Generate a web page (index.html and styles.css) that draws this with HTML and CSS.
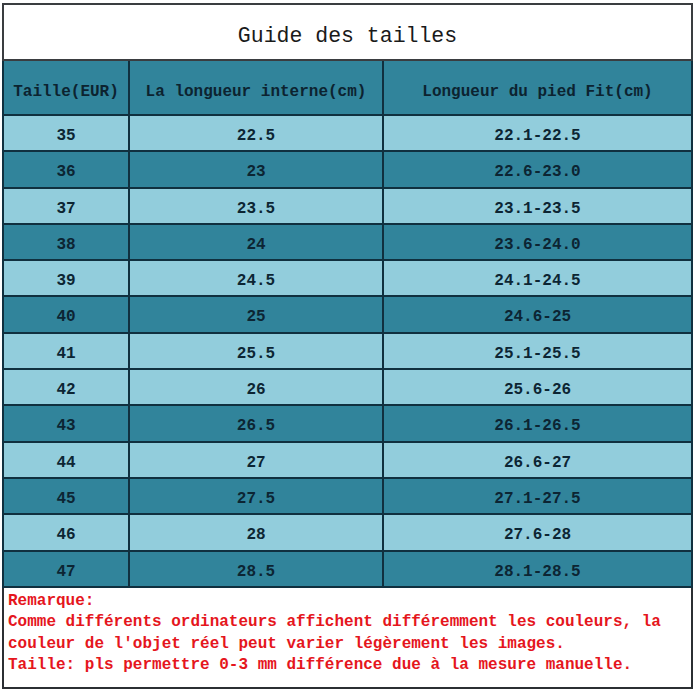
FILE: index.html
```html
<!DOCTYPE html>
<html lang="fr">
<head>
<meta charset="utf-8">
<title>Guide des tailles</title>
<link rel="stylesheet" href="styles.css">
</head>
<body>
<div class="sheet">
  <table class="sizes">
    <colgroup>
      <col class="c1"><col class="c2"><col class="c3">
    </colgroup>
    <thead>
      <tr class="title-row"><th colspan="3" class="title">Guide des tailles</th></tr>
      <tr class="head-row">
        <th>Taille(EUR)</th>
        <th>La longueur interne(cm)</th>
        <th>Longueur du pied Fit(cm)</th>
      </tr>
    </thead>
    <tbody>
      <tr class="light"><td>35</td><td>22.5</td><td>22.1-22.5</td></tr>
      <tr class="dark"><td>36</td><td>23</td><td>22.6-23.0</td></tr>
      <tr class="light"><td>37</td><td>23.5</td><td>23.1-23.5</td></tr>
      <tr class="dark"><td>38</td><td>24</td><td>23.6-24.0</td></tr>
      <tr class="light"><td>39</td><td>24.5</td><td>24.1-24.5</td></tr>
      <tr class="dark"><td>40</td><td>25</td><td>24.6-25</td></tr>
      <tr class="light"><td>41</td><td>25.5</td><td>25.1-25.5</td></tr>
      <tr class="light"><td>42</td><td>26</td><td>25.6-26</td></tr>
      <tr class="dark"><td>43</td><td>26.5</td><td>26.1-26.5</td></tr>
      <tr class="light"><td>44</td><td>27</td><td>26.6-27</td></tr>
      <tr class="dark"><td>45</td><td>27.5</td><td>27.1-27.5</td></tr>
      <tr class="light"><td>46</td><td>28</td><td>27.6-28</td></tr>
      <tr class="dark"><td>47</td><td>28.5</td><td>28.1-28.5</td></tr>
    </tbody>
    <tfoot>
      <tr class="note-row">
        <td colspan="3" class="note">
          <div>Remarque:</div>
          <div>Comme différents ordinateurs affichent différemment les couleurs, la</div>
          <div>couleur de l'objet réel peut varier légèrement les images.</div>
          <div>Taille: pls permettre 0-3 mm différence due à la mesure manuelle.</div>
        </td>
      </tr>
    </tfoot>
  </table>
</div>
</body>
</html>
```
FILE: styles.css
```css
html, body {
  margin: 0;
  padding: 0;
  background: #ffffff;
}

.sheet {
  padding: 3px 0 0 2px;
  width: 690px;
}

.sizes {
  width: 689px;
  table-layout: fixed;
  border-collapse: collapse;
  border: 2px solid #2b2f33;
  font-family: "Liberation Mono", "DejaVu Sans Mono", monospace;
}

.c1 { width: 126px; }
.c2 { width: 254px; }
.c3 { width: 309px; }

.sizes th,
.sizes td {
  padding: 0;
  text-align: center;
  vertical-align: top;
  border: 2px solid #10303f;
}

.sizes .title-row th.title {
  height: 35px;
  padding-top: 19px;
  line-height: 24px;
  background: #ffffff;
  color: #1a1a1a;
  font-weight: normal;
  font-size: 21.5px;
  border-color: #3a3d40;
}

.sizes .head-row th {
  height: 31px;
  padding-top: 22px;
  line-height: 18px;
  background: #31849b;
  color: #0c2330;
  font-weight: bold;
  font-size: 16px;
}

.sizes tbody td {
  height: 23.3px;
  padding-top: 11px;
  line-height: 18px;
  font-size: 16px;
  font-weight: bold;
  color: #0c2533;
}

.sizes tr.light td { background: #92cddc; }
.sizes tr.dark td { background: #31849b; }

.sizes .note {
  text-align: left;
  height: 96px;
  background: #ffffff;
  border-color: #2b2f33;
  color: #e5161d;
  font-size: 16px;
  font-weight: bold;
  line-height: 21.5px;
  padding: 3px 0 0 4px;
  white-space: nowrap;
}
```
